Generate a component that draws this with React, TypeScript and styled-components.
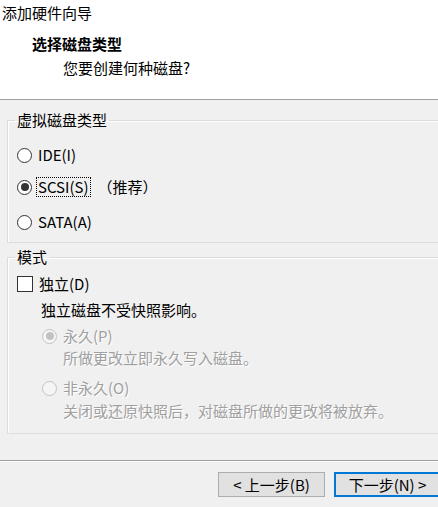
import React from "react";
import styled, { createGlobalStyle, css } from "styled-components";

const Global = createGlobalStyle`
  html, body {
    margin: 0;
    padding: 0;
    background: #f0f0f0;
  }
  body {
    font-family: "Noto Sans CJK SC", "Noto Sans", sans-serif;
    font-size: 15px;
    color: #000;
  }
  * { box-sizing: border-box; }
`;

const Window = styled.div`
  width: 438px;
  height: 507px;
  overflow: hidden;
  background: #f0f0f0;
  display: flex;
  flex-direction: column;
`;

const Header = styled.div`
  height: 100px;
  background: #fff;
  border-bottom: 1px solid #a0a0a0;
  display: flex;
  flex-direction: column;
`;

const TitleText = styled.div`
  padding: 3px 0 0 2px;
  line-height: 20px;
  color: #000;
`;

const Heading = styled.div`
  margin: 11px 0 0 32px;
  line-height: 20px;
  font-weight: 700;
`;

const SubHeading = styled.div`
  margin: 4px 0 0 63px;
  line-height: 20px;
`;

const Body = styled.div`
  display: flex;
  flex-direction: column;
  padding-left: 7px;
  overflow: hidden;
`;

const Group = styled.fieldset<{ $top: number; $bottom: number }>`
  width: 460px;
  margin: ${(p) => p.$top}px 0 0 0;
  padding: 0 0 ${(p) => p.$bottom}px 9px;
  border: 1px solid #dcdcdc;
  box-shadow: inset 1px 1px 0 #fff;
  min-width: 0;
  display: flex;
  flex-direction: column;
`;

const Legend = styled.legend`
  padding: 0 2px;
  margin-left: -2px;
  line-height: 20px;
`;

const Row = styled.div<{ $top: number; $left?: number }>`
  display: flex;
  align-items: center;
  height: 24px;
  margin-top: ${(p) => p.$top}px;
  margin-left: ${(p) => p.$left ?? 0}px;
`;

const Note = styled.div<{ $top: number; $left: number; $disabled?: boolean }>`
  line-height: 20px;
  margin-top: ${(p) => p.$top}px;
  margin-left: ${(p) => p.$left}px;
  ${(p) =>
    p.$disabled &&
    css`
      color: #a0a0a0;
      text-shadow: 1px 1px 0 #fff;
    `}
`;

const RadioCircle = styled.span<{ $checked?: boolean; $disabled?: boolean }>`
  width: 15px;
  height: 15px;
  border-radius: 50%;
  border: 1px solid ${(p) => (p.$disabled ? "#c2c2c2" : "#333")};
  background: ${(p) => (p.$disabled ? "#f5f5f5" : "#fff")};
  display: inline-flex;
  align-items: center;
  justify-content: center;
  flex: none;
  &::after {
    content: "";
    width: 8px;
    height: 8px;
    border-radius: 50%;
    background: ${(p) => (p.$disabled ? "#c2c2c2" : "#333")};
    display: ${(p) => (p.$checked ? "block" : "none")};
  }
`;

const CheckBox = styled.span`
  width: 16px;
  height: 16px;
  border: 1px solid #333;
  background: #fff;
  flex: none;
`;

const Label = styled.span<{ $focused?: boolean; $disabled?: boolean }>`
  margin-left: 4px;
  padding: 0 1px;
  line-height: 18px;
  border: 1px dotted ${(p) => (p.$focused ? "#000" : "transparent")};
  ${(p) =>
    p.$disabled &&
    css`
      color: #a0a0a0;
      text-shadow: 1px 1px 0 #fff;
    `}
`;

const Extra = styled.span`
  margin-left: 7px;
  line-height: 20px;
`;

const Separator = styled.div`
  margin-top: 26px;
  height: 1px;
  background: #a0a0a0;
  box-shadow: 0 1px 0 #fff;
`;

const Footer = styled.div`
  display: flex;
  justify-content: flex-start;
  gap: 9px;
  padding-left: 218px;
  margin-top: 11px;
`;

const Button = styled.button<{ $default?: boolean }>`
  width: 107px;
  height: 25px;
  flex: none;
  font-family: inherit;
  font-size: 15px;
  line-height: 20px;
  color: #000;
  background: #e1e1e1;
  border: ${(p) => (p.$default ? "2px solid #0078d7" : "1px solid #adadad")};
  padding: 0;
  display: flex;
  align-items: center;
  justify-content: center;
`;

export default function App() {
  return (
    <Window>
      <Global />
      <Header>
        <TitleText>添加硬件向导</TitleText>
        <Heading>选择磁盘类型</Heading>
        <SubHeading>您要创建何种磁盘?</SubHeading>
      </Header>
      <Body>
        <Group $top={10} $bottom={8}>
          <Legend>虚拟磁盘类型</Legend>
          <Row $top={13}>
            <RadioCircle />
            <Label>IDE(I)</Label>
          </Row>
          <Row $top={8}>
            <RadioCircle $checked />
            <Label $focused>SCSI(S)</Label>
            <Extra>（推荐）</Extra>
          </Row>
          <Row $top={11}>
            <RadioCircle />
            <Label>SATA(A)</Label>
          </Row>
        </Group>
        <Group $top={4} $bottom={12}>
          <Legend>模式</Legend>
          <Row $top={5}>
            <CheckBox />
            <Label>独立(D)</Label>
          </Row>
          <Note $top={4} $left={24}>
            独立磁盘不受快照影响。
          </Note>
          <Row $top={4} $left={25}>
            <RadioCircle $checked $disabled />
            <Label $disabled>永久(P)</Label>
          </Row>
          <Note $top={0} $left={46} $disabled>
            所做更改立即永久写入磁盘。
          </Note>
          <Row $top={8} $left={25}>
            <RadioCircle $disabled />
            <Label $disabled>非永久(O)</Label>
          </Row>
          <Note $top={1} $left={46} $disabled>
            关闭或还原快照后，对磁盘所做的更改将被放弃。
          </Note>
        </Group>
      </Body>
      <Separator />
      <Footer>
        <Button>&lt; 上一步(B)</Button>
        <Button $default>下一步(N) &gt;</Button>
      </Footer>
    </Window>
  );
}
